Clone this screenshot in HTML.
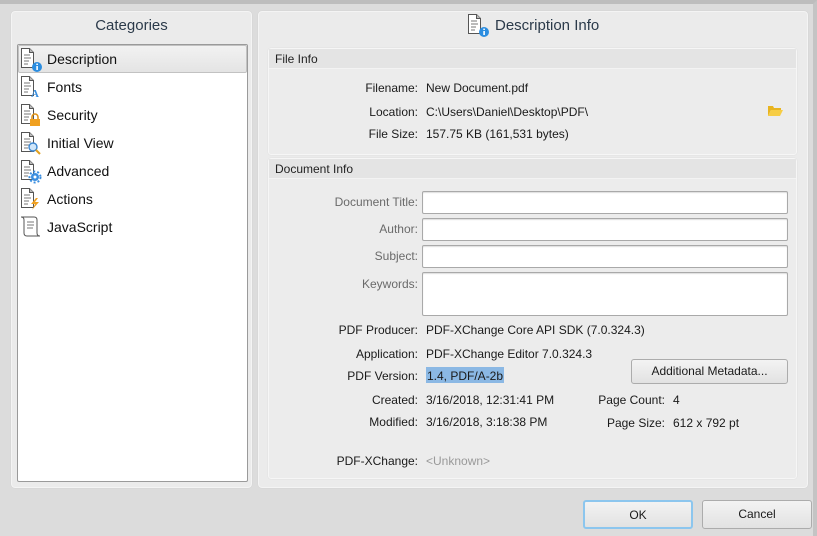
<!DOCTYPE html>
<html><head><meta charset="utf-8"><style>
*{margin:0;padding:0;box-sizing:border-box}
body{width:817px;height:536px;background:#d9d9d9;font-family:"Liberation Sans",sans-serif;font-size:12px;color:#1a1a1a;position:relative;overflow:hidden}
.a{position:absolute;white-space:nowrap}
.frame{left:0;top:0;width:817px;height:536px;border-top:4px solid #bdbdbd;border-right:4px solid #c4c4c4;background:#dcdcdc}
.panel{background:#ebebeb;border:1px solid #f4f4f4;border-radius:4px;box-shadow:0 0 1px #c8c8c8}
.hdr{font-size:15px;color:#2b3a4a;text-align:center}
.grp{background:#ececec;border:1px solid #f6f6f6;border-radius:3px;box-shadow:0 0 1px #cfcfcf}
.gh{height:20px;background:#e4e4e4;border-bottom:1px solid #f3f3f3;padding:3px 6px;color:#222}
.lbl{text-align:right;width:160px}
.g{color:#6a6a6a}
.inp{background:#fff;border:1px solid #a9a9a9;border-radius:2px;box-shadow:inset 0 1px 1px #ddd}
.btn{background:linear-gradient(#f3f3f3,#e2e2e2);border:1px solid #acacac;border-radius:3px;text-align:center;line-height:23px}
.li{left:47px;font-size:14px;color:#111}
</style></head><body>
<div class="a frame"></div>
<svg width="0" height="0" style="position:absolute"><defs>
<g id="doc"><path d="M1.5 .5h8l4 4v15h-12z" fill="#fff" stroke="#555"/><path d="M9.5 .5v4h4" fill="#bbb" stroke="#555"/><path d="M4 7h6M4 10h7M4 13h5M4 16h4" stroke="#777"/></g>
</defs></svg>

<div class="a panel" style="left:11px;top:11px;width:241px;height:477px"></div>
<div class="a hdr" style="left:11px;top:17px;width:241px">Categories</div>
<div class="a" style="left:17px;top:44px;width:231px;height:438px;background:#fff;border:1px solid #9a9a9a;border-radius:2px"></div>
<div class="a" style="left:18px;top:45px;width:229px;height:28px;background:linear-gradient(#f2f2f2,#e4e4e4);border:1px solid #c2c2c2;border-radius:2px"></div>

<svg class="a" style="left:18px;top:48px" width="30" height="190">
<use href="#doc" x="2" y="0"/><circle cx="19" cy="19" r="5" fill="#2b8de0"/><rect x="18.3" y="18" width="1.6" height="4" fill="#fff"/><rect x="18.3" y="15.6" width="1.6" height="1.4" fill="#fff"/>
<use href="#doc" x="2" y="28"/><text x="13" y="49" font-size="11" font-weight="bold" fill="#3a8fdf" font-family="Liberation Serif">A</text>
<use href="#doc" x="2" y="56"/><rect x="12" y="71" width="10" height="7" fill="#f0a020"/><path d="M14 71v-2a3 3 0 0 1 6 0v2" fill="none" stroke="#e09010" stroke-width="1.5"/>
<use href="#doc" x="2" y="84"/><circle cx="15" cy="99" r="4" fill="#cfe6fa" stroke="#3b86d0" stroke-width="1.4"/><path d="M18 102l4 4" stroke="#e0a020" stroke-width="2"/>
<use href="#doc" x="2" y="112"/><circle cx="17" cy="129" r="4" fill="#3a8ee0"/><circle cx="17" cy="129" r="5.5" fill="none" stroke="#3a8ee0" stroke-width="2" stroke-dasharray="2 2"/><circle cx="17" cy="129" r="1.5" fill="#fff"/>
<use href="#doc" x="2" y="140"/><path d="M18 150l-5 6h4l-3 6 7-8h-4l3-4z" fill="#f0a020"/>
<path d="M5 169h11c2 0 3 1 3 3v13c0 2 1 3 3 3H9c-2 0-3-1-3-3v-13c0-2-1-3-3-3z" fill="#fff" stroke="#555"/><path d="M9 174h7M9 177h7M9 180h6" stroke="#777"/>
</svg>
<div class="a li" style="top:51px">Description</div>
<div class="a li" style="top:79px">Fonts</div>
<div class="a li" style="top:107px">Security</div>
<div class="a li" style="top:135px">Initial View</div>
<div class="a li" style="top:163px">Advanced</div>
<div class="a li" style="top:191px">Actions</div>
<div class="a li" style="top:219px">JavaScript</div>

<div class="a panel" style="left:258px;top:11px;width:550px;height:477px"></div>
<svg class="a" style="left:466px;top:14px" width="26" height="24"><use href="#doc" x="1" y="0"/><circle cx="18" cy="18" r="5" fill="#2b8de0"/><rect x="17.3" y="17" width="1.6" height="4" fill="#fff"/><rect x="17.3" y="14.6" width="1.6" height="1.4" fill="#fff"/></svg>
<div class="a hdr" style="left:495px;top:17px">Description Info</div>

<div class="a grp" style="left:268px;top:48px;width:529px;height:107px"><div class="gh">File Info</div></div>
<div class="a lbl" style="left:258px;top:81px">Filename:</div><div class="a" style="left:426px;top:81px">New Document.pdf</div>
<div class="a lbl" style="left:258px;top:105px">Location:</div><div class="a" style="left:426px;top:105px">C:\Users\Daniel\Desktop\PDF\</div>
<svg class="a" style="left:767px;top:104px" width="17" height="13"><path d="M1 2h5l1 2h7v2H4l-3 6z" fill="#e8b420"/><path d="M4 6h12l-3 6H1z" fill="#f6cd45"/></svg>
<div class="a lbl" style="left:258px;top:127px">File Size:</div><div class="a" style="left:426px;top:127px">157.75 KB (161,531 bytes)</div>

<div class="a grp" style="left:268px;top:158px;width:529px;height:321px"><div class="gh">Document Info</div></div>
<div class="a lbl g" style="left:258px;top:195px">Document Title:</div><div class="a inp" style="left:422px;top:191px;width:366px;height:23px"></div>
<div class="a lbl g" style="left:258px;top:222px">Author:</div><div class="a inp" style="left:422px;top:218px;width:366px;height:23px"></div>
<div class="a lbl g" style="left:258px;top:249px">Subject:</div><div class="a inp" style="left:422px;top:245px;width:366px;height:23px"></div>
<div class="a lbl g" style="left:258px;top:277px">Keywords:</div><div class="a inp" style="left:422px;top:272px;width:366px;height:44px"></div>

<div class="a lbl" style="left:258px;top:323px">PDF Producer:</div><div class="a" style="left:426px;top:323px">PDF-XChange Core API SDK (7.0.324.3)</div>
<div class="a lbl" style="left:258px;top:347px">Application:</div><div class="a" style="left:426px;top:347px">PDF-XChange Editor 7.0.324.3</div>
<div class="a lbl" style="left:258px;top:369px">PDF Version:</div><div class="a" style="left:426px;top:367px;height:16px;background:#8bb8e4;padding:2px 1px">1.4, PDF/A-2b</div>
<div class="a lbl" style="left:258px;top:393px">Created:</div><div class="a" style="left:426px;top:393px">3/16/2018, 12:31:41 PM</div>
<div class="a lbl" style="left:258px;top:415px">Modified:</div><div class="a" style="left:426px;top:415px">3/16/2018, 3:18:38 PM</div>
<div class="a lbl" style="left:258px;top:454px">PDF-XChange:</div><div class="a" style="left:426px;top:454px;color:#999">&lt;Unknown&gt;</div>
<div class="a btn" style="left:631px;top:359px;width:157px;height:25px">Additional Metadata...</div>
<div class="a" style="left:560px;top:393px;width:105px;text-align:right">Page Count:</div><div class="a" style="left:673px;top:393px">4</div>
<div class="a" style="left:560px;top:416px;width:105px;text-align:right">Page Size:</div><div class="a" style="left:673px;top:416px">612 x 792 pt</div>

<div class="a btn" style="left:583px;top:500px;width:110px;height:29px;line-height:27px;border:2px solid #8cc6ee">OK</div>
<div class="a btn" style="left:702px;top:500px;width:110px;height:29px;line-height:27px">Cancel</div>
</body></html>
